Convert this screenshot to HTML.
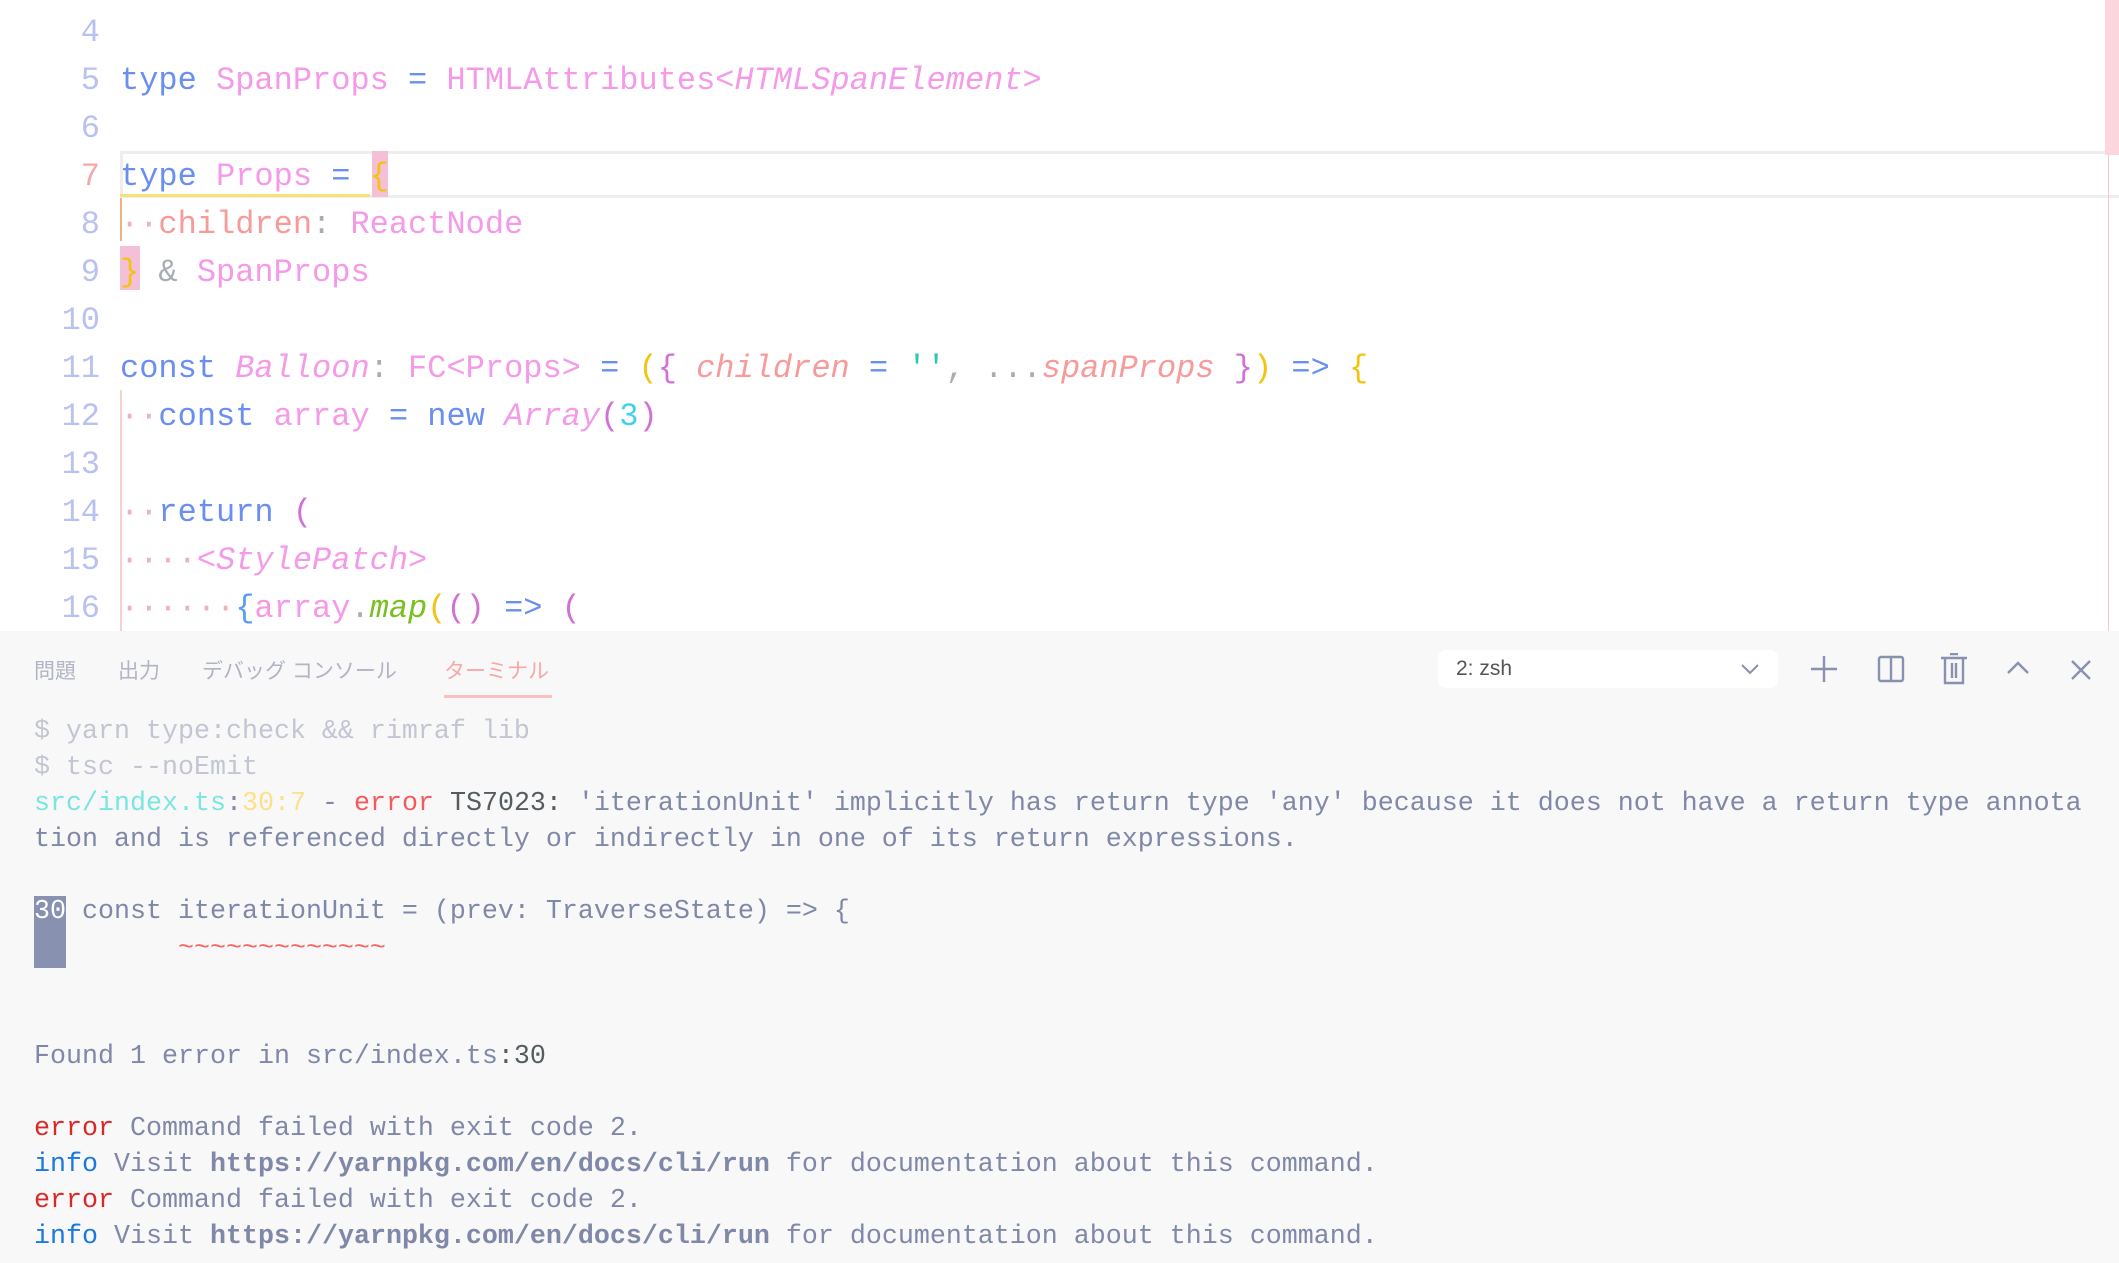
<!DOCTYPE html>
<html><head><meta charset="utf-8"><style>
*{margin:0;padding:0;box-sizing:border-box}
body{width:2119px;height:1263px;overflow:hidden;background:#fff;position:relative;font-family:"Liberation Mono",monospace}
.ed{position:absolute;left:0;top:9px;font-size:32px;line-height:48px;white-space:pre}
.ln{position:absolute;width:100px;text-align:right;color:#b9c1f2}
.cd{position:absolute;left:120px}
.kw{color:#6b8ff0}.ty{color:#f49ae8}.it{font-style:italic}.sa{color:#f79a9a}.gr{color:#a8adb5}
.y{color:#f2c40f}.m{color:#d070d8}.b{color:#5b9cf2}.tl{color:#2cc8b0}.cy{color:#40d0e8}.gn{color:#78c020}
.dt{color:#f4b0b8}
.term{position:absolute;left:0;top:631px;width:2119px;height:632px;background:#f8f8f8}
.tabs{position:absolute;top:24px;left:34px;font-family:"Liberation Sans","Noto Sans CJK JP",sans-serif;font-size:21px;color:#b0b4c4}
.tabs span{position:absolute;white-space:nowrap;top:0}
.tl2{position:absolute;left:34px;top:83px;font-size:26.67px;line-height:36.1px;white-space:pre;color:#8088a8}
.ic{position:absolute}
</style></head><body>
<div style="position:absolute;left:120px;top:151px;width:2000px;height:47px;border:3px solid #eeeeee;border-right:none"></div>
<div style="position:absolute;left:120px;top:194px;width:250px;height:3px;background:#f6e07a"></div>
<div style="position:absolute;left:2105px;top:0;width:14px;height:155px;background:#fbd6dc"></div>
<div style="position:absolute;left:2108px;top:155px;width:1px;height:476px;background:#f8c8d0"></div>
<div style="position:absolute;left:120px;top:198px;width:2px;height:43px;background:#f0b080"></div>
<div style="position:absolute;left:120px;top:390px;width:2px;height:241px;background:#f8d0d0"></div>
<div style="position:absolute;left:372px;top:151px;width:16px;height:46px;background:#f4c0d8"></div>
<div style="position:absolute;left:120px;top:246px;width:20px;height:44px;background:#f4c0d8"></div>
<div class="ed">
<div class="ln" style="top:0">4</div>
<div class="ln" style="top:48px">5</div><div class="cd" style="top:48px"><span class="kw">type</span> <span class="ty">SpanProps</span> <span class="kw">=</span> <span class="ty">HTMLAttributes&lt;<i>HTMLSpanElement</i>&gt;</span></div>
<div class="ln" style="top:96px">6</div>
<div class="ln" style="top:144px;color:#f4a8a8">7</div><div class="cd" style="top:144px"><span class="kw">type</span> <span class="ty">Props</span> <span class="kw">=</span> <span class="y">{</span></div>
<div class="ln" style="top:192px">8</div><div class="cd" style="top:192px"><span class="dt">··</span><span class="sa">children</span><span class="gr">:</span> <span class="ty">ReactNode</span></div>
<div class="ln" style="top:240px">9</div><div class="cd" style="top:240px"><span class="y">}</span> <span class="gr">&amp;</span> <span class="ty">SpanProps</span></div>
<div class="ln" style="top:288px">10</div>
<div class="ln" style="top:336px">11</div><div class="cd" style="top:336px"><span class="kw">const</span> <span class="ty it">Balloon</span><span class="gr">:</span> <span class="ty">FC&lt;Props&gt;</span> <span class="kw">=</span> <span class="y">(</span><span class="m">{</span> <span class="sa it">children</span> <span class="kw">=</span> <span class="tl">''</span><span class="gr">, ...</span><span class="sa it">spanProps</span> <span class="m">}</span><span class="y">)</span> <span class="kw">=&gt;</span> <span class="y">{</span></div>
<div class="ln" style="top:384px">12</div><div class="cd" style="top:384px"><span class="dt">··</span><span class="kw">const</span> <span class="ty">array</span> <span class="kw">=</span> <span class="kw">new</span> <span class="ty it">Array</span><span class="m">(</span><span class="cy">3</span><span class="m">)</span></div>
<div class="ln" style="top:432px">13</div>
<div class="ln" style="top:480px">14</div><div class="cd" style="top:480px"><span class="dt">··</span><span class="kw">return</span> <span class="m">(</span></div>
<div class="ln" style="top:528px">15</div><div class="cd" style="top:528px"><span class="dt">····</span><span class="ty it">&lt;StylePatch&gt;</span></div>
<div class="ln" style="top:576px">16</div><div class="cd" style="top:576px"><span class="dt">······</span><span class="b">{</span><span class="ty">array</span><span class="gr">.</span><span class="gn it">map</span><span class="y">(</span><span class="m">()</span> <span class="kw">=&gt;</span> <span class="m">(</span></div>
</div>
<div class="term">
<div class="tabs"><span style="left:0">問題</span><span style="left:84px">出力</span><span style="left:168px">デバッグ コンソール</span><span style="left:410px;color:#f8a8a8">ターミナル</span></div>
<div style="position:absolute;left:444px;top:64px;width:108px;height:3px;background:#fcc0c0"></div>
<div style="position:absolute;left:1438px;top:19px;width:340px;height:38px;background:#fff;border-radius:8px;font-family:'Liberation Sans',sans-serif;font-size:21px;color:#555;padding:7px 18px">2: zsh
<svg style="position:absolute;right:18px;top:13px" width="20" height="12" viewBox="0 0 20 12"><path d="M2 2l8 8 8-8" fill="none" stroke="#8890b0" stroke-width="2"/></svg></div>
<svg class="ic" style="left:1810px;top:24px" width="28" height="28" viewBox="0 0 28 28" fill="none" stroke="#8891b0" stroke-width="2.4"><path d="M14 1v26M1 14h26"/></svg>
<svg class="ic" style="left:1877px;top:24px" width="28" height="28" viewBox="0 0 28 28" fill="none" stroke="#8891b0" stroke-width="2.4"><rect x="2" y="2" width="24" height="24" rx="2"/><path d="M14 2v24"/></svg>
<svg class="ic" style="left:1940px;top:22px" width="28" height="32" viewBox="0 0 28 32" fill="none" stroke="#8891b0" stroke-width="2.4"><path d="M1 5h26M10 1h8M5 5v25h18V5M12 10v15M16 10v15"/></svg>
<svg class="ic" style="left:2006px;top:30px" width="24" height="14" viewBox="0 0 24 14" fill="none" stroke="#8891b0" stroke-width="2.4"><path d="M2 12l10-10 10 10"/></svg>
<svg class="ic" style="left:2070px;top:28px" width="22" height="22" viewBox="0 0 22 22" fill="none" stroke="#8891b0" stroke-width="2.4"><path d="M2 2l18 18M20 2L2 20"/></svg>
<div style="position:absolute;left:34px;top:265px;width:32px;height:72px;background:#8891b0"></div>
<div class="tl2"><span style="color:#c2c6d2">$ yarn type:check &amp;&amp; rimraf lib
$ tsc --noEmit</span>
<span style="color:#7ae6e0">src/index.ts</span>:<span style="color:#ffe08a">30</span><span style="color:#ffe08a">:7</span> - <span style="color:#f55a5a">error</span> <span style="color:#555c60">TS7023:</span> 'iterationUnit' implicitly has return type 'any' because it does not have a return type annota
tion and is referenced directly or indirectly in one of its return expressions.

<span style="color:#fff">30</span> const iterationUnit = (prev: TraverseState) =&gt; {
<span style="color:#f86868">         ~~~~~~~~~~~~~</span>


Found 1 error in src/index.ts<span style="color:#555c60">:30</span>

<span style="color:#d82828">error</span> Command failed with exit code 2.
<span style="color:#1a78e0">info</span> Visit <b>https://yarnpkg.com/en/docs/cli/run</b> for documentation about this command.
<span style="color:#d82828">error</span> Command failed with exit code 2.
<span style="color:#1a78e0">info</span> Visit <b>https://yarnpkg.com/en/docs/cli/run</b> for documentation about this command.
</div>
</div>
</body></html>
